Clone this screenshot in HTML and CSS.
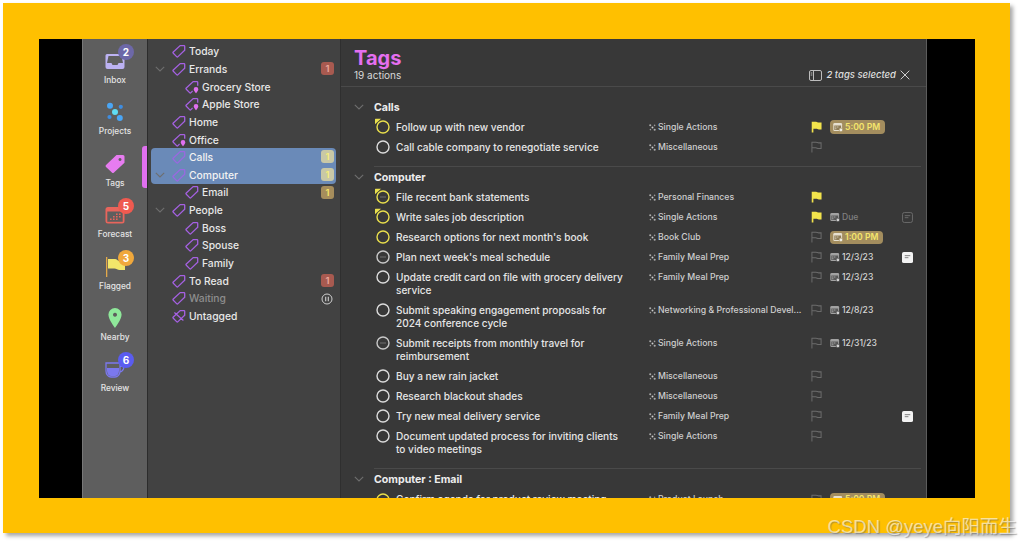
FILE: index.html
```html
<!DOCTYPE html>
<html lang="en">
<head>
<meta charset="utf-8">
<title>Tags</title>
<link rel="stylesheet" href="styles.css">
</head>
<body>
<svg class="defs" width="0" height="0" aria-hidden="true">
  <symbol id="tag" viewBox="0 0 14 14"><path d="M8.200 1.600H12a.7.7 0 0 1 .7.7v3.900L6 12.600a1 1 0 0 1-1.400 0L1.300 9.300a1 1 0 0 1 0-1.400z" fill="none" stroke="currentColor" stroke-width="1.300"/></symbol>
  <symbol id="tagloc" viewBox="0 0 14 14"><path d="M12.700 5.700V2.300a.7.7 0 0 0-.7-.7H8.200L1.300 7.900a1 1 0 0 0 0 1.400l3.300 3.300a1 1 0 0 0 1.400 0l1.600-1.700" fill="none" stroke="currentColor" stroke-width="1.300"/><path d="M11 7a2.300 2.300 0 0 1 2.300 2.300c0 1.600-2.300 4-2.300 4s-2.300-2.400-2.300-4A2.300 2.300 0 0 1 11 7z" fill="#e070f0"/></symbol>
  <symbol id="tagx" viewBox="0 0 14 14"><path d="M8.200 1.600H12a.7.7 0 0 1 .7.7v3.900L6 12.600a1 1 0 0 1-1.400 0L1.300 9.300a1 1 0 0 1 0-1.400zM2.400 3.400l9 8" fill="none" stroke="currentColor" stroke-width="1.300"/></symbol>
  <symbol id="chev" viewBox="0 0 10 6"><path d="M.8.800L5 5l4.200-4.200" fill="none" stroke="#6e6e6e" stroke-width="1.100"/></symbol>
  <symbol id="proj" viewBox="0 0 8 8"><circle cx="1.400" cy="1.400" r="1.200" fill="#aaa"/><circle cx="6.400" cy="1.600" r=".9" fill="#999"/><circle cx="4" cy="4" r="1.100" fill="#ccc"/><circle cx="1.600" cy="6.400" r=".9" fill="#999"/><circle cx="6.500" cy="6.500" r="1.200" fill="#aaa"/></symbol>
  <symbol id="flag" viewBox="0 0 12 13"><path d="M1 12.500V1.200h4.400c1.200 0 1.800.8 3 .8H11v6.200H8.200c-1.200 0-1.800-.8-3-.8H1" fill="none" stroke="#6b6b6b" stroke-width="1.100"/></symbol>
  <symbol id="flagon" viewBox="0 0 12 13"><path d="M.8 12.500V.8h4.700c1.200 0 1.800.9 3 .9h3v7.500h-3c-1.200 0-1.800-.8-3-.8H2.600v4.100z" fill="#f2e34c"/></symbol>
  <symbol id="cal" viewBox="0 0 10 10"><rect x=".3" y="1" width="8.800" height="8" rx="1.200" fill="#a2a2a2"/><rect x="1.300" y="3.500" width="6.800" height="4.500" fill="#5a5a5a"/><path d="M2.300 4.500h1v1h-1zM4.300 4.500h1v1h-1zM2.300 6.200h1v1h-1z" fill="#bdbdbd"/><circle cx="7.900" cy="7.900" r="1.800" fill="#d2d2d2" stroke="#383838" stroke-width=".6"/></symbol>
  <symbol id="calpill" viewBox="0 0 10 10"><rect x=".3" y="1" width="8.800" height="8" rx="1.200" fill="#e6e0d0"/><rect x="1.300" y="3.500" width="6.800" height="4.500" fill="#8f7d58"/><path d="M2.300 4.500h1v1h-1zM4.300 4.500h1v1h-1zM2.300 6.200h1v1h-1z" fill="#e6e0d0"/><circle cx="7.900" cy="7.900" r="1.800" fill="#efefe8" stroke="#a38d5e" stroke-width=".6"/></symbol>
  <symbol id="note" viewBox="0 0 12 12"><rect x=".6" y=".6" width="10.800" height="10.800" rx="2" fill="none" stroke="#6e6e6e"/><path d="M3 4h6M3 6.200h4" stroke="#6e6e6e"/></symbol>
  <symbol id="noteon" viewBox="0 0 12 12"><rect width="12" height="12" rx="2" fill="#f2f2f2"/><path d="M3 4h6M3 6.200h4" stroke="#777"/></symbol>
  <symbol id="circle" viewBox="0 0 14 14"><circle cx="7" cy="7" r="6" fill="none" stroke="#dcdcdc" stroke-width="1.400"/></symbol>
  <symbol id="circledots" viewBox="0 0 14 14"><circle cx="7" cy="7" r="6" fill="none" stroke="#c8c8c8" stroke-width="1.400"/><path d="M4.500 6.500h1v1h-1zM6.500 6.500h1v1h-1zM8.500 6.500h1v1h-1z" fill="#a8a8a8"/></symbol>
  <symbol id="circleflag" viewBox="0 0 16 16"><circle cx="9" cy="9" r="6" fill="none" stroke="#e9df4c" stroke-width="1.400"/><path d="M1.500.8h5.500L1 6.300V1.300a.5.5 0 0 1 .5-.5z" fill="#e9df4c"/></symbol>
  <symbol id="circleflagdots" viewBox="0 0 16 16"><circle cx="9" cy="9" r="6" fill="none" stroke="#e9df4c" stroke-width="1.400"/><path d="M1.500.8h5.500L1 6.300V1.300a.5.5 0 0 1 .5-.5z" fill="#e9df4c"/><path d="M6.500 8.500h1v1h-1zM8.500 8.500h1v1h-1zM10.500 8.500h1v1h-1z" fill="#a8a8a8"/></symbol>
  <symbol id="circleyel" viewBox="0 0 14 14"><circle cx="7" cy="7" r="6" fill="none" stroke="#e9df4c" stroke-width="1.400"/></symbol>
</svg>

<div class="frame">
  <div class="screen">
    <nav class="rail">
      <div class="rail-item">
        <svg class="rail-icon" viewBox="0 0 22 20"><path d="M3 3h16a1.500 1.500 0 0 1 1.500 1.500V16a2 2 0 0 1-2 2h-15a2 2 0 0 1-2-2V4.500A1.500 1.500 0 0 1 3 3z" fill="#bcb2f2"/><path d="M4.500 5h13l1.500 7h-4.500l-1 2h-5l-1-2H3z" fill="#5e5e5e"/></svg>
        <span class="count c-inbox">2</span><span class="rail-label">Inbox</span>
      </div>
      <div class="rail-item">
        <svg class="rail-icon" viewBox="0 0 22 20"><circle cx="6" cy="3.800" r="3" fill="#4aa6f5"/><circle cx="16.800" cy="4.800" r="2.100" fill="#3f8de0"/><circle cx="11" cy="10" r="3" fill="#5fdcf5"/><circle cx="5.500" cy="15" r="2.100" fill="#3f8de0"/><circle cx="15.800" cy="16" r="3" fill="#4aa6f5"/></svg>
        <span class="rail-label">Projects</span>
      </div>
      <div class="rail-item active">
        <svg class="rail-icon" viewBox="0 0 22 20"><path d="M12.500 1H19a1.500 1.500 0 0 1 1.500 1.500v6.300L10 18.600a1.500 1.500 0 0 1-2.100 0L2 13a1.500 1.500 0 0 1 0-2.100zM16 4a1.500 1.500 0 1 0 .01 0z" fill="#e77cf0" fill-rule="evenodd"/></svg>
        <span class="rail-label">Tags</span><span class="marker"></span>
      </div>
      <div class="rail-item">
        <svg class="rail-icon" viewBox="0 0 22 20"><rect x="1.500" y="2" width="19" height="16.500" rx="2.500" fill="#e8655c"/><rect x="3.300" y="6.500" width="15.400" height="10.300" fill="#5e5e5e"/><path d="M12 8.500h1.600v1.600H12zM15 8.500h1.600v1.600H15zM9 11h1.600v1.600H9zM12 11h1.600v1.600H12zM15 11h1.600v1.600H15zM6 13.500h1.600v1.600H6zM9 13.500h1.600v1.600H9zM12 13.500h1.600v1.600H12z" fill="#e8655c"/></svg>
        <span class="count c-forecast">5</span><span class="rail-label">Forecast</span>
      </div>
      <div class="rail-item">
        <svg class="rail-icon" viewBox="0 0 22 20"><path d="M2 0h1.300v20H2z" fill="#e3a94a"/><path d="M4 2h7c2 0 2.500 2 4.500 2H21v9h-5.500c-2 0-3-1.500-5-1.500H4z" fill="#f2e66a"/></svg>
        <span class="count c-flagged">3</span><span class="rail-label">Flagged</span>
      </div>
      <div class="rail-item">
        <svg class="rail-icon" viewBox="0 0 22 20"><path d="M11 0a6.600 6.600 0 0 1 6.600 6.600C17.600 11.500 11 20 11 20S4.400 11.500 4.400 6.600A6.600 6.600 0 0 1 11 0zm0 4.800a2 2 0 1 0 .01 0z" fill="#8fe89a" fill-rule="evenodd"/></svg>
        <span class="rail-label">Nearby</span>
      </div>
      <div class="rail-item">
        <svg class="rail-icon" viewBox="0 0 22 20"><path d="M2 4h14v8c0 3.500-2.500 6-5 6H7c-2.500 0-5-2.500-5-6zM16 7c3 0 4.500 1 3.500 3s-2.500 3-4 3" fill="none" stroke="#7b78ee" stroke-width="1.300"/><path d="M3 9h12v3c0 3-2 5-4 5H7c-2 0-4-2-4-5z" fill="#7b78ee"/></svg>
        <span class="count c-review">6</span><span class="rail-label">Review</span>
      </div>
    </nav>

    <aside class="sidebar">
      <div class="s-row l1"><svg class="s-tag"><use href="#tag"/></svg>Today</div>
      <div class="s-row l1"><svg class="s-chev"><use href="#chev"/></svg><svg class="s-tag"><use href="#tag"/></svg>Errands<span class="badge red">1</span></div>
      <div class="s-row l2"><svg class="s-tag"><use href="#tagloc"/></svg>Grocery Store</div>
      <div class="s-row l2"><svg class="s-tag"><use href="#tagloc"/></svg>Apple Store</div>
      <div class="s-row l1"><svg class="s-tag"><use href="#tag"/></svg>Home</div>
      <div class="s-row l1"><svg class="s-tag"><use href="#tagloc"/></svg>Office</div>
      <div class="s-row l1 sel first"><svg class="s-tag"><use href="#tag"/></svg>Calls<span class="badge pale">1</span></div>
      <div class="s-row l1 sel last"><svg class="s-chev"><use href="#chev"/></svg><svg class="s-tag"><use href="#tag"/></svg>Computer<span class="badge pale">1</span></div>
      <div class="s-row l2"><svg class="s-tag"><use href="#tag"/></svg>Email<span class="badge gold">1</span></div>
      <div class="s-row l1"><svg class="s-chev"><use href="#chev"/></svg><svg class="s-tag"><use href="#tag"/></svg>People</div>
      <div class="s-row l2"><svg class="s-tag"><use href="#tag"/></svg>Boss</div>
      <div class="s-row l2"><svg class="s-tag"><use href="#tag"/></svg>Spouse</div>
      <div class="s-row l2"><svg class="s-tag"><use href="#tag"/></svg>Family</div>
      <div class="s-row l1"><svg class="s-tag"><use href="#tag"/></svg>To Read<span class="badge red">1</span></div>
      <div class="s-row l1 dim"><svg class="s-tag"><use href="#tag"/></svg>Waiting<svg class="pause" viewBox="0 0 12 12"><circle cx="6" cy="6" r="5" fill="none" stroke="#cfcfcf"/><path d="M4.700 3.800v4.400M7.300 3.800v4.400" stroke="#cfcfcf" stroke-width="1.100"/></svg></div>
      <div class="s-row l1"><svg class="s-tag"><use href="#tagx"/></svg>Untagged</div>
    </aside>

    <main class="main">
      <header class="head">
        <div>
          <h1 class="title">Tags</h1>
          <div class="sub">19 actions</div>
        </div>
        <div class="selected">
          <svg class="sel-ico" viewBox="0 0 13 11"><rect x=".5" y=".5" width="12" height="10" rx="1.500" fill="none" stroke="#bdbdbd"/><path d="M4.500.5v10M1.700 3h1.600M1.700 5h1.600" stroke="#bdbdbd"/></svg>
          <em>2 tags selected</em>
          <svg class="sel-x" viewBox="0 0 10 10"><path d="M.7.700l8.600 8.600M9.300.700L.7 9.300" stroke="#cfcfcf" stroke-width="1"/></svg>
        </div>
      </header>

      <section class="group">
        <h2 class="g-title"><svg class="g-chev"><use href="#chev"/></svg>Calls</h2>
        <div class="row"><svg class="chk flagged"><use href="#circleflag"/></svg><div class="txt">Follow up with new vendor</div><div class="prj"><svg><use href="#proj"/></svg>Single Actions</div><svg class="flg"><use href="#flagon"/></svg><div class="dt"><span class="pill"><svg><use href="#calpill"/></svg>5:00 PM</span></div></div>
        <div class="row"><svg class="chk"><use href="#circle"/></svg><div class="txt">Call cable company to renegotiate service</div><div class="prj"><svg><use href="#proj"/></svg>Miscellaneous</div><svg class="flg"><use href="#flag"/></svg></div>
      </section>

      <section class="group">
        <h2 class="g-title"><svg class="g-chev"><use href="#chev"/></svg>Computer</h2>
        <div class="row"><svg class="chk flagged"><use href="#circleflagdots"/></svg><div class="txt">File recent bank statements</div><div class="prj"><svg><use href="#proj"/></svg>Personal Finances</div><svg class="flg"><use href="#flagon"/></svg></div>
        <div class="row"><svg class="chk flagged"><use href="#circleflag"/></svg><div class="txt">Write sales job description</div><div class="prj"><svg><use href="#proj"/></svg>Single Actions</div><svg class="flg"><use href="#flagon"/></svg><div class="dt muted"><svg><use href="#cal"/></svg>Due</div><svg class="nt"><use href="#note"/></svg></div>
        <div class="row"><svg class="chk"><use href="#circleyel"/></svg><div class="txt">Research options for next month's book</div><div class="prj"><svg><use href="#proj"/></svg>Book Club</div><svg class="flg"><use href="#flag"/></svg><div class="dt"><span class="pill"><svg><use href="#calpill"/></svg>1:00 PM</span></div></div>
        <div class="row"><svg class="chk"><use href="#circledots"/></svg><div class="txt">Plan next week's meal schedule</div><div class="prj"><svg><use href="#proj"/></svg>Family Meal Prep</div><svg class="flg"><use href="#flag"/></svg><div class="dt"><svg><use href="#cal"/></svg>12/3/23</div><svg class="nt"><use href="#noteon"/></svg></div>
        <div class="row"><svg class="chk"><use href="#circle"/></svg><div class="txt">Update credit card on file with grocery delivery service</div><div class="prj"><svg><use href="#proj"/></svg>Family Meal Prep</div><svg class="flg"><use href="#flag"/></svg><div class="dt"><svg><use href="#cal"/></svg>12/3/23</div></div>
        <div class="row"><svg class="chk"><use href="#circle"/></svg><div class="txt">Submit speaking engagement proposals for 2024 conference cycle</div><div class="prj"><svg><use href="#proj"/></svg>Networking &amp; Professional Devel...</div><svg class="flg"><use href="#flag"/></svg><div class="dt"><svg><use href="#cal"/></svg>12/8/23</div></div>
        <div class="row"><svg class="chk"><use href="#circledots"/></svg><div class="txt">Submit receipts from monthly travel for reimbursement</div><div class="prj"><svg><use href="#proj"/></svg>Single Actions</div><svg class="flg"><use href="#flag"/></svg><div class="dt"><svg><use href="#cal"/></svg>12/31/23</div></div>
        <div class="row"><svg class="chk"><use href="#circle"/></svg><div class="txt">Buy a new rain jacket</div><div class="prj"><svg><use href="#proj"/></svg>Miscellaneous</div><svg class="flg"><use href="#flag"/></svg></div>
        <div class="row"><svg class="chk"><use href="#circle"/></svg><div class="txt">Research blackout shades</div><div class="prj"><svg><use href="#proj"/></svg>Miscellaneous</div><svg class="flg"><use href="#flag"/></svg></div>
        <div class="row"><svg class="chk"><use href="#circle"/></svg><div class="txt">Try new meal delivery service</div><div class="prj"><svg><use href="#proj"/></svg>Family Meal Prep</div><svg class="flg"><use href="#flag"/></svg><svg class="nt gap"><use href="#noteon"/></svg></div>
        <div class="row"><svg class="chk"><use href="#circle"/></svg><div class="txt">Document updated process for inviting clients to video meetings</div><div class="prj"><svg><use href="#proj"/></svg>Single Actions</div><svg class="flg"><use href="#flag"/></svg></div>
      </section>

      <section class="group">
        <h2 class="g-title"><svg class="g-chev"><use href="#chev"/></svg>Computer : Email</h2>
        <div class="row"><svg class="chk"><use href="#circleyel"/></svg><div class="txt">Confirm agenda for product review meeting</div><div class="prj"><svg><use href="#proj"/></svg>Product Launch</div><svg class="flg"><use href="#flag"/></svg><div class="dt"><span class="pill"><svg><use href="#calpill"/></svg>5:00 PM</span></div></div>
      </section>
    </main>
  </div>
  <div class="mark">CSDN @yeye向阳而生</div>
</div>
</body>
</html>
```

FILE: styles.css
```css
* { box-sizing: border-box; }
html, body { margin: 0; padding: 0; background: #fff; overflow: hidden; }
body { width: 1022px; height: 545px; font-family: Inter, "Liberation Sans", sans-serif; }
.defs { position: absolute; }

.frame {
  position: relative;
  width: 1007px;
  height: 530px;
  margin: 3px 0 0 3px;
  padding: 36px 35px 35px 36px;
  background: #ffc000;
  box-shadow: 3px 3px 4px #a8a8a8;
}
.screen {
  display: flex;
  height: 459px;
  padding: 0 48px 0 43px;
  background: #000;
  overflow: hidden;
}
.mark {
  position: absolute;
  right: -7px;
  bottom: -5.5px;
  font: 18.5px/24px "Liberation Sans", "Noto Sans CJK SC", sans-serif;
  color: rgba(255, 255, 255, .6);
  text-shadow: 1px 1px 1px rgba(90, 90, 90, .45);
  white-space: nowrap;
}

/* rail */
.rail {
  flex: 0 0 66px;
  padding-top: 9px;
  background: #5e5e5e;
  border-left: 1px solid #777;
  border-right: 1px solid #2c2c2c;
}
.rail-item {
  position: relative;
  display: flex;
  flex-direction: column;
  align-items: center;
  height: 51.4px;
  padding-top: 3px;
}
.rail-icon { width: 22px; height: 20px; margin-bottom: 4px; }
.rail-label {
  font-size: 8.3px;
  line-height: 11px;
  font-weight: 500;
  color: #e4e4e4;
}
.count {
  position: absolute;
  top: -4px;
  left: 35px;
  width: 16px;
  height: 16px;
  border-radius: 50%;
  font-size: 10px;
  font-weight: 700;
  line-height: 16px;
  text-align: center;
  color: #fff;
}
.c-inbox { background: #6d68a8; }
.c-forecast { background: #ef5a50; }
.c-flagged { background: #f0a83c; }
.c-review { background: #5a5cf0; }
.marker {
  position: absolute;
  right: 0;
  top: -5px;
  width: 5px;
  height: 42px;
  border-radius: 3px 0 0 3px;
  background: #e070f0;
}

/* sidebar */
.sidebar {
  flex: 0 0 193px;
  padding-top: 3.4px;
  background: #424242;
  border-right: 1px solid #2f2f2f;
}
.s-row {
  position: relative;
  display: flex;
  align-items: center;
  height: 17.67px;
  margin: 0 4px 0 3px;
  font-size: 10.3px;
  font-weight: 500;
  color: #e8e8e8;
  white-space: nowrap;
}
.s-row.l1 { padding-left: 21px; }
.s-row.l2 { padding-left: 34px; }
.s-tag { flex: none; width: 14px; height: 14px; margin-right: 3px; color: #a561e2; }
.s-chev { position: absolute; left: 4px; top: 6px; width: 10px; height: 6px; }
.sel { background: #6a8ab8; color: #f2f2f2; }
.sel .s-tag { color: #9a68e0; }
.first { border-radius: 4px 4px 0 0; }
.last { border-radius: 0 0 4px 4px; }
.dim { color: #8e8e8e; }
.badge {
  position: absolute;
  right: 2px;
  top: 2px;
  width: 13px;
  height: 13px;
  border-radius: 3px;
  font-size: 9.5px;
  font-weight: 600;
  line-height: 13px;
  text-align: center;
}
.red { background: #a85a50; color: #eba99c; }
.pale { background: #c9c8a6; color: #f6ee7a; }
.gold { background: #a68d5c; color: #f4e468; }
.pause { position: absolute; right: 3px; top: 3px; width: 12px; height: 12px; }

/* main */
.main {
  flex: 1;
  min-width: 0;
  background: #383838;
  border-right: 1px solid #5c5c5c;
  overflow: hidden;
}
.head {
  display: flex;
  justify-content: space-between;
  align-items: flex-end;
  height: 48px;
  padding: 0 16px 5px 13px;
  border-bottom: 1px solid #4a4a4a;
}
.title {
  margin: 0;
  font-size: 20px;
  line-height: 24px;
  font-weight: 700;
  color: #e56ff0;
}
.sub { font-size: 10px; line-height: 11px; color: #d8d8d8; }
.selected { display: flex; align-items: center; color: #dedede; font-size: 9.5px; line-height: 12px; }
.sel-ico { width: 13px; height: 11px; margin-right: 4px; }
.sel-x { width: 10px; height: 10px; margin-left: 4px; }
em { font-weight: 500; }

.group {
  margin: 0 5px 0 33px;
  padding-bottom: 8.3px;
  border-bottom: 1px solid #4a4a4a;
}
.group:first-of-type { padding-top: 12.5px; }
.group + .group { padding-top: 3px; }
.g-title {
  position: relative;
  margin: 0 0 3px;
  font-size: 10.6px;
  font-weight: 700;
  line-height: 15px;
  color: #ededed;
}
.g-chev { position: absolute; left: -20px; top: 4px; width: 10px; height: 6px; }
.row {
  display: grid;
  grid-template-columns: 13px 260px 162px 19px 72px 12px;
  align-items: start;
  min-height: 20px;
  margin-left: 2px;
  padding-top: 3px;
  padding-bottom: 4px;
}
.chk { width: 14px; height: 14px; margin: -.5px 0 -1px -.5px; overflow: visible; }
.chk.flagged { width: 16px; height: 16px; margin: -2.5px 0 -1px -2.5px; }
.txt {
  width: 232px;
  margin-left: 7px;
  font-size: 10.1px;
  line-height: 13px;
  font-weight: 500;
  color: #e6e6e6;
}
.prj {
  display: flex;
  align-items: center;
  font-size: 8.7px;
  line-height: 13px;
  font-weight: 500;
  color: #cfcfcf;
  white-space: nowrap;
  overflow: hidden;
}
.prj svg { flex: none; width: 7px; height: 7px; margin-right: 2px; }
.flg { width: 11px; height: 12px; margin-top: .5px; }
.dt {
  display: flex;
  align-items: center;
  height: 13px;
  font-size: 8.6px;
  line-height: 13px;
  font-weight: 500;
  color: #d6d6d6;
}
.dt svg { flex: none; width: 10px; height: 10px; margin-right: 2px; }
.muted { color: #808080; }
.pill {
  display: inline-flex;
  align-items: center;
  height: 13.4px;
  padding: 0 5px 0 3px;
  border-radius: 4px;
  background: #a38d5e;
  color: #f5e66c;
  font-weight: 600;
}
.nt { width: 11px; height: 11px; margin-top: 1px; }
.nt.gap { grid-column: 6; }
```
